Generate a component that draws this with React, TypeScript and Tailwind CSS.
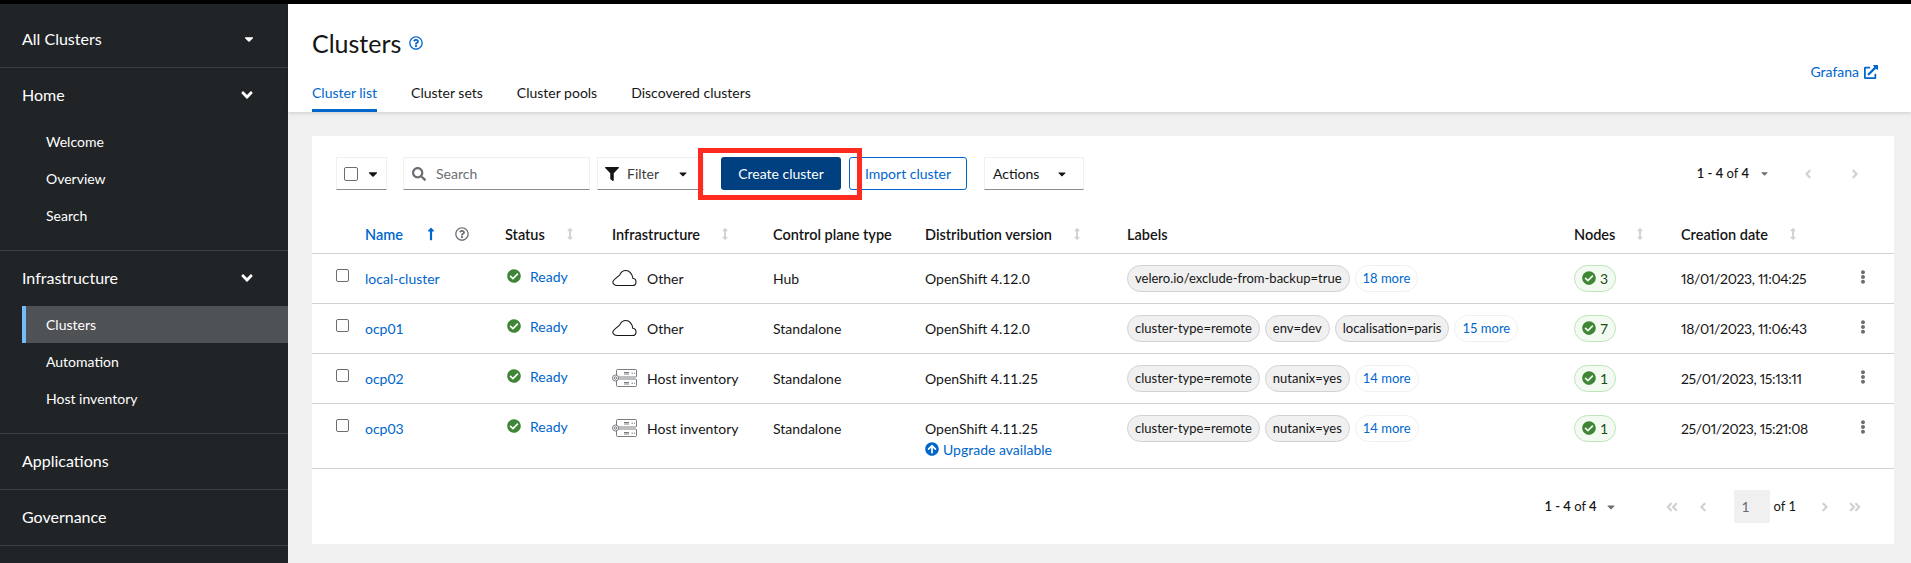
import {
  FaAngleDoubleLeft,
  FaAngleDoubleRight,
  FaAngleDown,
  FaAngleLeft,
  FaAngleRight,
  FaArrowCircleUp,
  FaArrowsAltV,
  FaCaretDown,
  FaCheckCircle,
  FaEllipsisV,
  FaExternalLinkAlt,
  FaFilter,
  FaLongArrowAltUp,
  FaRegQuestionCircle,
  FaSearch,
} from "react-icons/fa";

const rows = [
  {
    name: "local-cluster",
    infra: "Other",
    type: "Hub",
    version: "OpenShift 4.12.0",
    labels: ["velero.io/exclude-from-backup=true"],
    more: "18 more",
    nodes: 3,
    created: "18/01/2023, 11:04:25",
  },
  {
    name: "ocp01",
    infra: "Other",
    type: "Standalone",
    version: "OpenShift 4.12.0",
    labels: ["cluster-type=remote", "env=dev", "localisation=paris"],
    more: "15 more",
    nodes: 7,
    created: "18/01/2023, 11:06:43",
  },
  {
    name: "ocp02",
    infra: "Host inventory",
    type: "Standalone",
    version: "OpenShift 4.11.25",
    labels: ["cluster-type=remote", "nutanix=yes"],
    more: "14 more",
    nodes: 1,
    created: "25/01/2023, 15:13:11",
  },
  {
    name: "ocp03",
    infra: "Host inventory",
    type: "Standalone",
    version: "OpenShift 4.11.25",
    upgrade: true,
    labels: ["cluster-type=remote", "nutanix=yes"],
    more: "14 more",
    nodes: 1,
    created: "25/01/2023, 15:21:08",
  },
];

function CloudIcon() {
  return (
    <svg width="25" height="18" viewBox="0 0 25 18" fill="none" stroke="#151515" strokeWidth="1.1">
      <path d="M5 16.500h15.500c2 0 3.500-1.600 3.500-3.600 0-1.900-1.400-3.400-3.200-3.600C20.400 5 17.600 1.500 13.800 1.500c-2.900 0-5 1.800-6.200 4.600C5.200 8 3 9.800 1.500 11.500 0 13.500 1.500 16.500 5 16.500z" />
    </svg>
  );
}

function ServerIcon() {
  return (
    <svg width="25" height="18" viewBox="0 0 25 18" fill="none" stroke="#6a6e73" strokeWidth="0.9">
      <rect x="4.500" y="0.500" width="20" height="7.500" rx="1" />
      <rect x="4.500" y="10" width="20" height="7.500" rx="1" />
      <circle cx="3.500" cy="9" r="3" fill="#fff" />
      <circle cx="3.500" cy="9" r="1.200" />
      <path d="M12 3.500h5M12 5h5M19.500 4.200h1.500M22 4.200h1M12 13.500h5M12 15h5M19.500 14.200h1.500M22 14.200h1" />
    </svg>
  );
}

function SortIcon() {
  return <FaArrowsAltV className="text-[12px] text-[#d2d2d2]" />;
}

function SideHeader({ label, caret, className }: { label: string; caret?: "down" | "angle"; className?: string }) {
  return (
    <div className={`flex items-center justify-between pl-[22px] pr-[32px] text-[16px] text-white ${className}`}>
      <span>{label}</span>
      {caret === "down" && <FaCaretDown className="text-[14px]" />}
      {caret === "angle" && <FaAngleDown className="text-[18px]" />}
    </div>
  );
}

function SideLink({ label, active }: { label: string; active?: boolean }) {
  return (
    <div
      className={`ml-[22px] flex h-[37px] items-center border-l-4 pl-[20px] text-[14px] text-white ${
        active ? "border-[#73bcf7] bg-[#4f5255]" : "border-transparent"
      }`}
    >
      {label}
    </div>
  );
}

function Sidebar() {
  return (
    <aside className="flex w-[288px] shrink-0 flex-col bg-[#212427]">
      <div className="border-b border-[#3c3f42]">
        <SideHeader label="All Clusters" caret="down" className="h-[63px] pt-[7px]" />
      </div>
      <div className="border-b border-[#3c3f42] pb-[16px]">
        <SideHeader label="Home" caret="angle" className="h-[55px] pb-[1px]" />
        <SideLink label="Welcome" />
        <SideLink label="Overview" />
        <SideLink label="Search" />
      </div>
      <div className="border-b border-[#3c3f42] pb-[16px]">
        <SideHeader label="Infrastructure" caret="angle" className="h-[55px] pb-[2px]" />
        <SideLink label="Clusters" active />
        <SideLink label="Automation" />
        <SideLink label="Host inventory" />
      </div>
      <div className="border-b border-[#3c3f42]">
        <SideHeader label="Applications" className="h-[55px] pb-[2px]" />
      </div>
      <div className="border-b border-[#3c3f42]">
        <SideHeader label="Governance" className="h-[55px] pb-[2px]" />
      </div>
    </aside>
  );
}

function PageHeader() {
  return (
    <header className="relative z-10 h-[108px] shrink-0 bg-white pl-[24px] pr-[33px] shadow-[0_1px_4px_rgba(3,3,3,0.16)]">
      <div className="flex h-[78px] items-start justify-between">
        <div className="flex items-center gap-[8px] pt-[23px]">
          <h1 className="text-[25px] leading-[32px] text-[#151515]">Clusters</h1>
          <FaRegQuestionCircle className="text-[14px] text-[#06c]" />
        </div>
        <div className="flex items-center gap-[5px] pt-[57px] text-[14px] leading-[21px] text-[#06c]">
          Grafana
          <FaExternalLinkAlt className="text-[14px]" />
        </div>
      </div>
      <nav className="flex gap-[34px] text-[14px] leading-[21px] text-[#151515]">
        <div className="h-[30px] border-b-[3px] border-[#06c] text-[#06c]">Cluster list</div>
        <div>Cluster sets</div>
        <div>Cluster pools</div>
        <div>Discovered clusters</div>
      </nav>
    </header>
  );
}

function Toolbar() {
  return (
    <div className="flex h-[33px] items-center pl-[24px] pr-[32px] text-[14px]">
      <div className="flex h-[33px] w-[51px] items-center gap-[8px] border border-[#f0f0f0] border-b-[#8a8d90] pl-[7px]">
        <span className="h-[14px] w-[14px] rounded-[2px] border border-[#6a6e73]" />
        <FaCaretDown className="text-[14px] text-[#151515]" />
      </div>
      <div className="ml-[16px] flex h-[33px] w-[187px] items-center gap-[10px] border border-[#f0f0f0] border-b-[#8a8d90] pl-[8px] text-[#6a6e73]">
        <FaSearch className="text-[14px]" />
        Search
      </div>
      <div className="ml-[7px] flex h-[33px] w-[107px] items-center border border-[#f0f0f0] border-b-[#8a8d90] pl-[7px] text-[#151515]">
        <FaFilter className="text-[14px]" />
        <span className="ml-[8px] text-[#3c3f42]">Filter</span>
        <FaCaretDown className="ml-[18px] text-[12px]" />
      </div>
      <div className="ml-[17px] flex h-[33px] w-[120px] items-center justify-center rounded-[3px] bg-[#004080] text-white">
        Create cluster
      </div>
      <div className="ml-[8px] flex h-[33px] w-[118px] items-center justify-center rounded-[3px] border border-[#06c] text-[#06c]">
        Import cluster
      </div>
      <div className="ml-[17px] flex h-[33px] w-[100px] items-center border border-[#f0f0f0] border-b-[#8a8d90] pl-[8px] text-[#151515]">
        Actions
        <FaCaretDown className="ml-[17px] text-[12px]" />
      </div>
      <div className="ml-auto flex items-center text-[13px] text-[#151515]">
        <span className="font-semibold">1 - 4</span>&nbsp;of&nbsp;<span className="font-semibold">4</span>
        <FaCaretDown className="ml-[10px] text-[11px] text-[#6a6e73]" />
        <FaAngleLeft className="ml-[31px] text-[14px] text-[#d2d2d2]" />
        <FaAngleRight className="ml-[33px] text-[14px] text-[#d2d2d2]" />
      </div>
    </div>
  );
}

function Th({ children }: { children?: React.ReactNode }) {
  return (
    <th className="h-[63px] pt-[26px] text-left align-middle text-[14.5px] font-semibold text-[#151515]">
      <div className="flex items-center">{children}</div>
    </th>
  );
}

function ClusterTable() {
  return (
    <table className="w-full table-fixed border-collapse text-[14px] leading-[21px] text-[#151515]">
      <colgroup>
        <col className="w-[53px]" />
        <col className="w-[140px]" />
        <col className="w-[107px]" />
        <col className="w-[161px]" />
        <col className="w-[152px]" />
        <col className="w-[202px]" />
        <col className="w-[447px]" />
        <col className="w-[107px]" />
        <col className="w-[172px]" />
        <col />
      </colgroup>
      <thead>
        <tr className="border-b border-[#d2d2d2]">
          <Th />
          <Th>
            <span className="text-[#06c]">Name</span>
            <FaLongArrowAltUp className="ml-[21px] text-[14px] text-[#06c]" />
            <FaRegQuestionCircle className="ml-[17px] text-[14px] text-[#6a6e73]" />
          </Th>
          <Th>
            Status
            <span className="ml-[19px]"><SortIcon /></span>
          </Th>
          <Th>
            Infrastructure
            <span className="ml-[19px]"><SortIcon /></span>
          </Th>
          <Th>Control plane type</Th>
          <Th>
            Distribution version
            <span className="ml-[19px]"><SortIcon /></span>
          </Th>
          <Th>Labels</Th>
          <Th>
            Nodes
            <span className="ml-[19px]"><SortIcon /></span>
          </Th>
          <Th>
            Creation date
            <span className="ml-[19px]"><SortIcon /></span>
          </Th>
          <Th />
        </tr>
      </thead>
      <tbody>
        {rows.map((r) => (
          <tr key={r.name} className="border-b border-[#d2d2d2] align-top">
            <td className="pl-[24px] pt-[15px]">
              <span className="block h-[13px] w-[13px] rounded-[2px] border border-[#6a6e73]" />
            </td>
            <td className="pt-[14px] text-[#06c]">{r.name}</td>
            <td className="pt-[12px]">
              <div className="flex items-center gap-[9px] text-[#06c]">
                <FaCheckCircle className="ml-[2px] text-[14px] text-[#3e8635]" />
                Ready
              </div>
            </td>
            <td className="pt-[14px]">
              <div className="flex items-center gap-[10px]">
                {r.infra === "Other" ? <CloudIcon /> : <ServerIcon />}
                {r.infra}
              </div>
            </td>
            <td className="pt-[14px]">{r.type}</td>
            <td className="pt-[14px] pb-[8px]">
              <div>{r.version}</div>
              {r.upgrade && (
                <div className="flex items-center gap-[4px] text-[#06c]">
                  <FaArrowCircleUp className="text-[14px]" />
                  Upgrade available
                </div>
              )}
            </td>
            <td className="pt-[11px] pb-[11px]">
              <div className="flex gap-[5px] text-[13px]">
                {r.labels.map((l) => (
                  <span key={l} className="flex h-[27px] items-center rounded-full border border-[#d2d2d2] bg-[#f0f0f0] px-[7px]">
                    {l}
                  </span>
                ))}
                <span className="flex h-[27px] items-center rounded-full border border-[#f0f0f0] px-[7px] text-[#06c]">
                  {r.more}
                </span>
              </div>
            </td>
            <td className="pt-[11px]">
              <span className="inline-flex h-[27px] items-center gap-[4px] rounded-full border border-[#bde5b8] bg-[#f3faf2] px-[7px] text-[#1e4f18]">
                <FaCheckCircle className="text-[14px] text-[#3e8635]" />
                {r.nodes}
              </span>
            </td>
            <td className="pt-[14px] tracking-[-0.35px] proportional-nums">{r.created}</td>
            <td className="pt-[14px]">
              <FaEllipsisV className="mt-[2px] ml-[3px] text-[14px] text-[#6a6e73]" />
            </td>
          </tr>
        ))}
      </tbody>
    </table>
  );
}

function Pagination() {
  return (
    <div className="flex h-[76px] items-center justify-end pr-[32px] text-[13px] text-[#151515]">
      <span className="font-semibold">1 - 4</span>&nbsp;of&nbsp;<span className="font-semibold">4</span>
      <FaCaretDown className="ml-[8px] text-[12px] text-[#6a6e73]" />
      <FaAngleDoubleLeft className="ml-[48px] text-[14px] text-[#d2d2d2]" />
      <FaAngleLeft className="ml-[17px] text-[14px] text-[#d2d2d2]" />
      <div className="ml-[24px] flex h-[33px] w-[36px] items-center bg-[#f0f0f0] pl-[8px] text-[14px] text-[#6a6e73]">1</div>
      <span className="ml-[4px]">of 1</span>
      <FaAngleRight className="ml-[22px] text-[14px] text-[#d2d2d2]" />
      <FaAngleDoubleRight className="ml-[16px] text-[14px] text-[#d2d2d2]" />
    </div>
  );
}

export default function App() {
  return (
    <div className="flex h-[563px] flex-col overflow-hidden bg-black pt-[4px] font-['Lato',sans-serif]">
      <div className="flex min-h-0 flex-1">
        <Sidebar />
        <main className="flex min-w-0 flex-1 flex-col bg-[#f0f0f0]">
          <PageHeader />
          <div className="relative ml-[24px] mr-[17px] mt-[24px] h-[408px] bg-white">
            <div className="pt-[21px]">
              <Toolbar />
            </div>
            <ClusterTable />
            <Pagination />
            <div className="absolute left-[386px] top-[12px] h-[52px] w-[164px] border-[5px] border-[#ff2a20]" />
          </div>
        </main>
      </div>
    </div>
  );
}
